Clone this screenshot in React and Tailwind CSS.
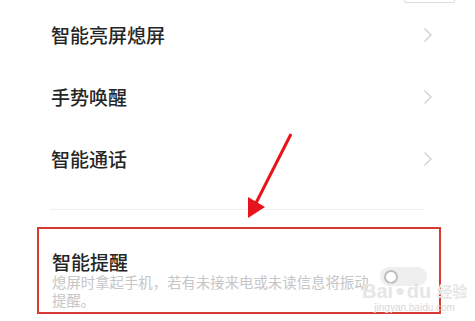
import React from "react";

const font = { fontFamily: '"Noto Sans CJK SC", "Noto Sans", sans-serif' };

function Chevron() {
  return (
    <svg width="10" height="16" viewBox="0 0 10 16" className="mr-[42px]">
      <path d="M1.5 1.5 L8 8 L1.5 14.5" fill="none" stroke="#d0d0d0" strokeWidth="1.4" />
    </svg>
  );
}

function Row({ label }) {
  return (
    <div className="flex h-[62px] items-center justify-between pl-[51px]">
      <span className="text-[19px] font-medium leading-[22px] text-[#262626]">{label}</span>
      <Chevron />
    </div>
  );
}

export default function App() {
  return (
    <div className="relative h-[321px] w-[475px] overflow-hidden bg-white" style={font}>
      <div className="flex h-[4px] justify-end">
        <div className="mr-[20px] h-[3px] w-[51px] rounded-b-[2px] border-x border-b border-[#dcdcdc]" />
      </div>
      <Row label="智能亮屏熄屏" />
      <Row label="手势唤醒" />
      <Row label="智能通话" />
      <div className="h-[19px]" />
      <div className="mx-[50px] h-px bg-[#f0f0f0]" />
      <div className="h-[17px]" />
      <div className="ml-[37px] flex h-[87px] w-[404px] items-start justify-between border-2 border-[#d73a33] pl-[13px] pt-[22px]">
        <div className="flex flex-col">
          <span className="text-[19px] font-medium leading-[22px] text-[#262626]">智能提醒</span>
          <span className="text-[14.4px] leading-[18px] text-[#c6c6c6]">
            熄屏时拿起手机，若有未接来电或未读信息将振动
            <br />
            提醒。
          </span>
        </div>
        <div className="mr-[12px] mt-[16px] flex h-[19px] w-[47px] items-center rounded-full bg-[#efefef] pl-[4px]">
          <div className="h-[14px] w-[14px] rounded-full border-2 border-[#bdbdbd] bg-white" />
        </div>
      </div>

      <svg className="absolute left-0 top-0" width="475" height="321" viewBox="0 0 475 321">
        <line x1="291" y1="134" x2="256" y2="203" stroke="#e8141b" strokeWidth="3" />
        <polygon points="248,197 265,207 248,218" fill="#e8141b" />
      </svg>

      <div className="absolute left-[362px] top-[281px] flex flex-col items-center" style={{ fontFamily: '"Liberation Sans", sans-serif' }}>
        <div className="flex items-end gap-[2px] text-[20px] font-bold leading-[20px] text-[#e6e6e6]">
          <span>Bai</span>
          <span className="text-[16px]">●</span>
          <span>du</span>
          <span className="ml-[4px] text-[15px]" style={font}>经验</span>
        </div>
        <span className="mt-[1px] text-[10px] leading-[12px] text-[#d8d8d8]">jingyan.baidu.com</span>
      </div>
    </div>
  );
}
